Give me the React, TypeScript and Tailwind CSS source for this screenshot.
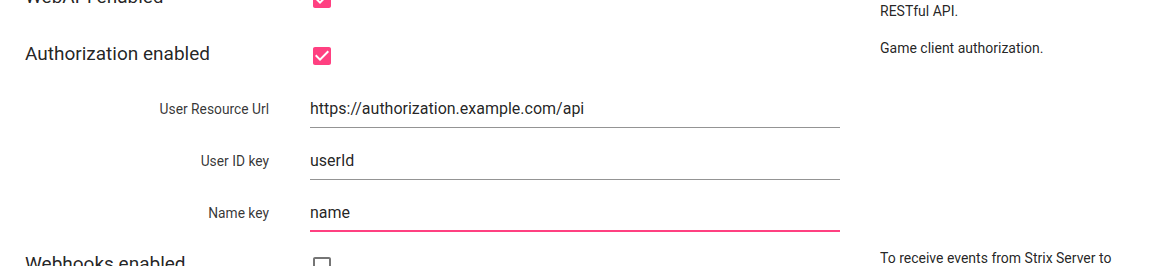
import React from "react";

const PINK = "#ff4081";

function CheckBox({ checked }: { checked: boolean }) {
  return (
    <svg width="24" height="24" viewBox="0 0 24 24" className="block">
      {checked ? (
        <path
          fill={PINK}
          d="M19 3H5c-1.11 0-2 .9-2 2v14c0 1.1.89 2 2 2h14c1.11 0 2-.9 2-2V5c0-1.1-.89-2-2-2zm-9 14l-5-5 1.41-1.41L10 14.17l7.59-7.59L19 8l-9 9z"
        />
      ) : (
        <path
          fill="rgba(0,0,0,0.54)"
          d="M19 5v14H5V5h14m0-2H5c-1.1 0-2 .9-2 2v14c0 1.1.9 2 2 2h14c1.1 0 2-.9 2-2V5c0-1.1-.9-2-2-2z"
        />
      )}
    </svg>
  );
}

type Field = { label: string; value: string; focused?: boolean };

function SubField({ label, value, focused }: Field) {
  return (
    <div className="flex h-[52px] items-end">
      <div className="w-[310px] shrink-0 pr-[41px] pb-[11px] text-right text-[13.8px] leading-[16px] text-black/80">
        {label}
      </div>
      <div
        className={
          focused
            ? "w-[530px] shrink-0 border-b-2 border-[#ff4081] pt-[6px] pb-[8px] text-[16px] leading-[19px] text-black/[0.87]"
            : "w-[530px] shrink-0 border-b border-[#949494] pt-[6px] pb-[9px] text-[16px] leading-[19px] text-black/[0.87]"
        }
      >
        {value}
      </div>
    </div>
  );
}

function Section({
  label,
  checked,
  description,
  fields,
  bottom,
}: {
  label: string;
  checked: boolean;
  description: React.ReactNode;
  fields?: Field[];
  bottom: string;
}) {
  return (
    <div className={bottom}>
      <div className="flex h-[38px]">
        <div className="w-[310px] shrink-0 pl-[25px] pt-[4px] text-[19px] leading-[23px] text-black/[0.87]">
          {label}
        </div>
        <div className="w-[530px] shrink-0 pt-[6px]">
          <CheckBox checked={checked} />
        </div>
        <div className="ml-[40px] w-[260px] whitespace-nowrap text-[14px] leading-[20px] text-black/[0.87]">
          {description}
        </div>
      </div>
      {fields && (
        <div>
          {fields.map((f) => (
            <SubField key={f.label} {...f} />
          ))}
        </div>
      )}
    </div>
  );
}

export default function App() {
  return (
    <div className="h-[266px] w-[1154px] overflow-hidden bg-white font-['Roboto',sans-serif]">
      <div className="-mt-[19px]">
        <Section
          label="WebAPI enabled"
          checked
          bottom="pb-[19px]"
          description={
            <>
              Manage Strix Server remotely through a
              <br />
              RESTful API.
            </>
          }
        />
        <Section
          label="Authorization enabled"
          checked
          bottom="pb-[16px]"
          description="Game client authorization."
          fields={[
            { label: "User Resource Url", value: "https://authorization.example.com/api" },
            { label: "User ID key", value: "userId" },
            { label: "Name key", value: "name", focused: true },
          ]}
        />
        <Section
          label="Webhooks enabled"
          checked={false}
          bottom="pb-[19px]"
          description={
            <>
              To receive events from Strix Server to
              <br />
              your own server via HTTP requests.
            </>
          }
        />
      </div>
    </div>
  );
}
